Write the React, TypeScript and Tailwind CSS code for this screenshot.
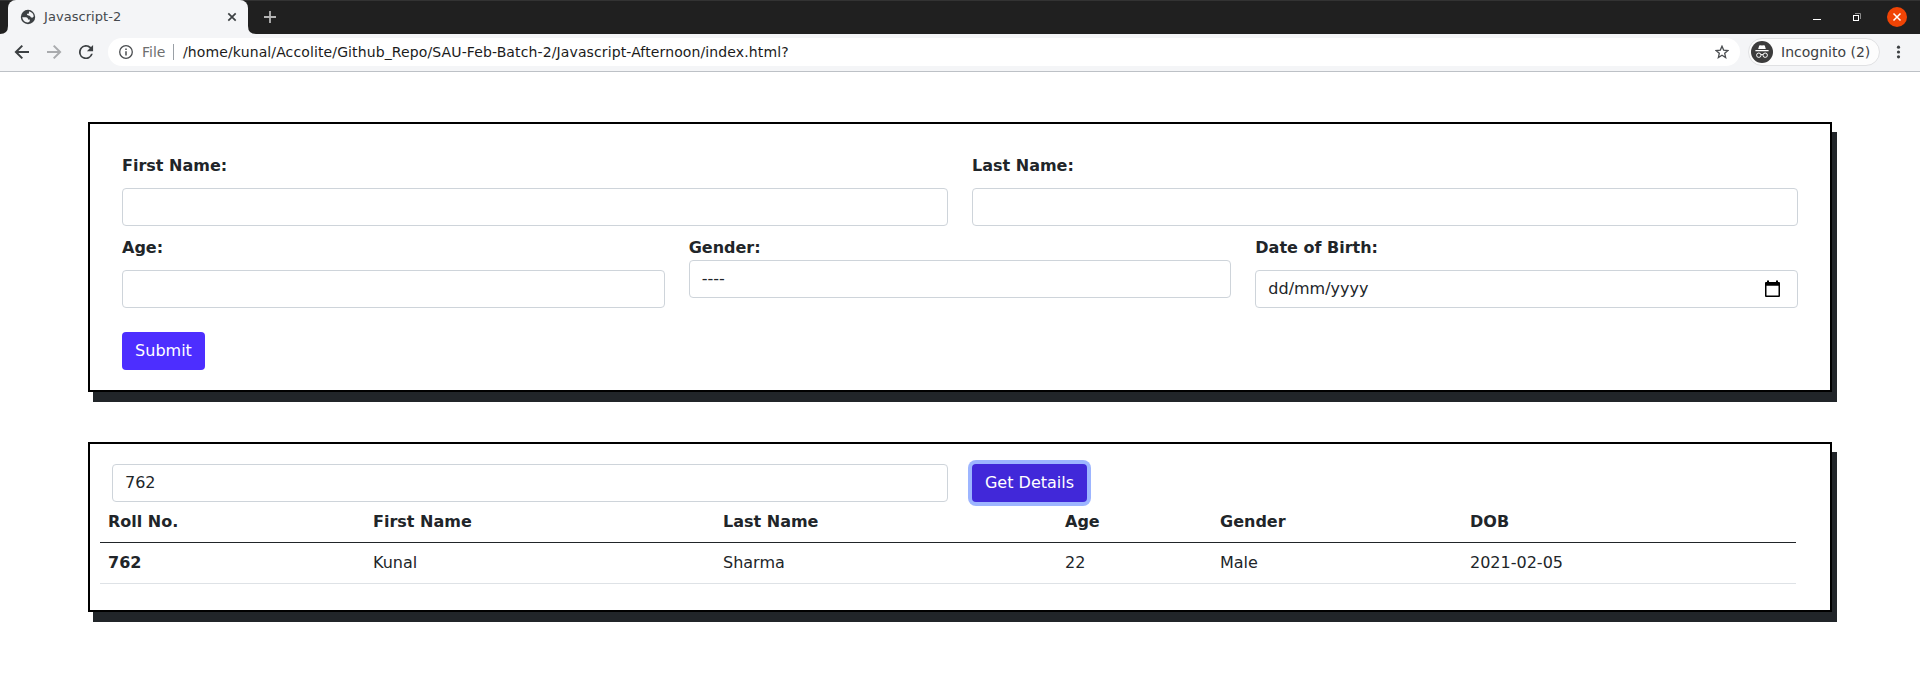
import React from "react";

const student = { roll: "762", first: "Kunal", last: "Sharma", age: "22", gender: "Male", dob: "2021-02-05" };

function TabStrip() {
  return (
    <div className="flex h-[34px] bg-[#202020] border-t border-[#333333] box-border">
      <div className="-mt-px flex h-[34px] w-[256px] shrink-0 items-end">
        <svg className="h-[34px] w-[8px] shrink-0" viewBox="0 0 8 34">
          <path d="M0 34 Q8 34 8 26 V34 Z" fill="#f4f5f7" />
        </svg>
        <div className="flex h-[34px] w-[240px] items-center rounded-t-lg bg-[#f4f5f7] pl-[12px] pr-[10px]">
          <svg width="16" height="16" viewBox="0 0 16 16">
            <circle cx="8" cy="8" r="7.2" fill="#3c4043" />
            <path d="M2.2 8.2 H6.2 Q8.2 8.4 8.1 10.4 H9.8 V12 Q9.6 13.4 7.6 13.6 Q3 13 2.2 8.2 Z M9.2 2.3 Q13.6 3.8 13.7 7.6 Q12.6 9.4 10.8 8.2 Q10.4 6.6 8.6 6.6 Q6.6 6.4 6.9 4.8 H8.7 Z" fill="#f4f5f7" />
          </svg>
          <span className="ml-[8px] text-[13px] leading-4 tracking-[0.05px] text-[#45494d]">Javascript-2</span>
          <svg className="ml-auto" width="12" height="12" viewBox="0 0 12 12">
            <path d="M2.3 2.3 L9.7 9.7 M9.7 2.3 L2.3 9.7" stroke="#3c4043" strokeWidth="1.7" />
          </svg>
        </div>
        <svg className="h-[34px] w-[8px] shrink-0" viewBox="0 0 8 34">
          <path d="M8 34 Q0 34 0 26 V34 Z" fill="#f4f5f7" />
        </svg>
      </div>
      <svg className="ml-[8px] mt-[10px]" width="12" height="12" viewBox="0 0 12 12">
        <path d="M6 0 V12 M0 6 H12" stroke="#b4b4b4" strokeWidth="1.8" />
      </svg>
      <div className="ml-auto flex h-[32px] items-center pr-[13px]">
        <svg width="8" height="12" viewBox="0 0 8 12">
          <path d="M0 8.5 H8" stroke="#ffffff" strokeWidth="1" />
        </svg>
        <svg className="ml-[32px]" width="8" height="8" viewBox="0 0 8 8">
          <path d="M2 0.5 H7.5 V6" fill="none" stroke="#8a8a8a" strokeWidth="1" />
          <rect x="0.5" y="2.5" width="5" height="5" fill="none" stroke="#ffffff" strokeWidth="1" />
        </svg>
        <svg className="ml-[26px]" width="20" height="20" viewBox="0 0 20 20">
          <circle cx="10" cy="10" r="10" fill="#f04405" />
          <path d="M6.5 6.5 L13.5 13.5 M13.5 6.5 L6.5 13.5" stroke="#ffffff" strokeWidth="1.5" />
        </svg>
      </div>
    </div>
  );
}

function Toolbar() {
  return (
    <div className="flex h-[38px] items-center border-b border-[#bdc1c6] bg-[#f4f5f7] pb-px pl-[14px]">
      <svg width="16" height="16" viewBox="0 0 16 16">
        <path d="M15 8 H2 M8.3 1.6 L1.9 8 L8.3 14.4" fill="none" stroke="#3c4043" strokeWidth="2" />
      </svg>
      <svg className="ml-[16px]" width="16" height="16" viewBox="0 0 16 16">
        <path d="M1 8 H14 M7.7 1.6 L14.1 8 L7.7 14.4" fill="none" stroke="#a9abae" strokeWidth="2" />
      </svg>
      <svg className="ml-[16px]" width="16" height="16" viewBox="0 0 16 16">
        <path d="M13.65 2.35A8 8 0 1 0 15.73 10H13.65A6 6 0 1 1 8 2c1.66 0 3.14.69 4.22 1.78L9 7h7V0z" fill="#3c4043" transform="translate(1 1) scale(.88)" />
      </svg>
      <div className="ml-[14px] flex h-[28px] w-[1632px] items-center rounded-full bg-white pl-[11px] pr-[11px]">
        <svg width="14" height="14" viewBox="0 0 14 14">
          <circle cx="7" cy="7" r="6.3" fill="none" stroke="#4a4d50" strokeWidth="1.3" />
          <path d="M7 6.2 V10.4 M7 3.5 V5" stroke="#4a4d50" strokeWidth="1.5" />
        </svg>
        <span className="ml-[9px] w-[24px] text-[14px] leading-5 text-[#6e6e6e]">File</span>
        <span className="ml-[7px] h-4 w-px bg-[#9aa0a6]" />
        <span className="ml-[9px] whitespace-nowrap text-[14px] leading-5 tracking-[0.12px] text-[#1b1b1b]">
          /home/kunal/Accolite/Github_Repo/SAU-Feb-Batch-2/Javascript-Afternoon/index.html?
        </span>
        <svg className="ml-auto" width="14" height="14" viewBox="0 0 14 14">
          <path d="M7 1.2 L8.65 5.1 L12.9 5.5 L9.7 8.3 L10.65 12.5 L7 10.2 L3.35 12.5 L4.3 8.3 L1.1 5.5 L5.35 5.1 Z" fill="none" stroke="#4a4d50" strokeWidth="1.3" />
        </svg>
      </div>
      <div className="ml-[8px] flex h-[28px] w-[132px] items-center rounded-full border border-[#e0e1e3] bg-[#fdfdfd] pl-[2px]">
        <svg width="22" height="22" viewBox="0 0 22 22">
          <circle cx="11" cy="11" r="11" fill="#3c3c3c" />
          <path d="M7.2 8 L8.2 4.4 Q9.5 4 11 4.4 Q12.5 4 13.8 4.4 L14.8 8 Z M4.4 9 H17.6 V10.2 H4.4 Z" fill="#ffffff" />
          <circle cx="7.8" cy="14.2" r="2.2" fill="none" stroke="#ffffff" strokeWidth="1" />
          <circle cx="14.2" cy="14.2" r="2.2" fill="none" stroke="#ffffff" strokeWidth="1" />
          <path d="M10 13.8 Q11 13 12 13.8" fill="none" stroke="#ffffff" />
        </svg>
        <span className="ml-[8px] whitespace-nowrap text-[14px] leading-5 text-[#3c4043]">Incognito (2)</span>
      </div>
      <svg className="ml-[16px]" width="5" height="14" viewBox="0 0 5 14">
        <circle cx="2.5" cy="2.2" r="1.6" fill="#3c4043" />
        <circle cx="2.5" cy="7" r="1.6" fill="#3c4043" />
        <circle cx="2.5" cy="11.8" r="1.6" fill="#3c4043" />
      </svg>
    </div>
  );
}

const control = "block h-[38px] w-full appearance-none rounded border border-[#ced4da] bg-white px-3 text-base leading-6 text-[#212529] outline-none";
const textInput = `${control} pb-0.5`;

function TextField({ label }: { label: string }) {
  return (
    <label className="block font-bold">
      <span className="mb-[10px] block leading-6">{label}</span>
      <input type="text" className={textInput} />
    </label>
  );
}

function StudentForm() {
  return (
    <form className="h-[270px] border-2 border-black px-8 pt-[30px] shadow-[5px_10px_#212529]" onSubmit={(e) => e.preventDefault()}>
      <div className="grid grid-cols-2 gap-6">
        <TextField label="First Name:" />
        <TextField label="Last Name:" />
      </div>
      <div className="mt-[10px] grid grid-cols-3 gap-6">
        <TextField label="Age:" />
        <div>
          <div className="font-bold leading-6">Gender:</div>
          <select className={control}>
            <option>----</option>
            <option>Male</option>
            <option>Female</option>
          </select>
        </div>
        <div>
          <div className="mb-[10px] font-bold leading-6">Date of Birth:</div>
          <div className="flex h-[38px] items-center justify-between rounded border border-[#ced4da] px-3 leading-6">
            <span>dd/mm/yyyy</span>
            <svg className="mb-px mr-[5px]" width="15" height="18" viewBox="0 0 15 18">
              <path d="M2 0.5 H4 V2 H11 V0.5 H13 V2 H14 Q15 2 15 3 V16 Q15 17 14 17 H1 Q0 17 0 16 V3 Q0 2 1 2 H2 Z M1.5 5.7 V15.5 H13.5 V5.7 Z" fill="#000000" fillRule="evenodd" />
            </svg>
          </div>
        </div>
      </div>
      <button className="mt-6 h-[38px] w-[83px] rounded bg-[#4d2eff] leading-6 text-white">Submit</button>
    </form>
  );
}

function StudentLookup() {
  return (
    <section className="mt-[50px] h-[170px] border-2 border-black pl-[10px] pt-5 shadow-[5px_10px_#212529]">
      <div className="flex gap-6 pl-3">
        <div className="w-[836px]">
          <input type="text" defaultValue="762" className={textInput} />
        </div>
        <button className="h-[38px] w-[115px] whitespace-nowrap rounded bg-[#4128d9] leading-6 text-white shadow-[0_0_0_4px_#9db5ff]">Get Details</button>
      </div>
      <table className="w-[1696px] table-fixed border-separate border-spacing-0 text-left leading-6">
        <colgroup>
          <col className="w-[265px]" />
          <col className="w-[350px]" />
          <col className="w-[342px]" />
          <col className="w-[155px]" />
          <col className="w-[250px]" />
          <col className="w-[334px]" />
        </colgroup>
        <thead>
          <tr>
            <th className="border-b border-[#212529] p-2 font-bold">Roll No.</th>
            <th className="border-b border-[#212529] p-2 font-bold">First Name</th>
            <th className="border-b border-[#212529] p-2 font-bold">Last Name</th>
            <th className="border-b border-[#212529] p-2 font-bold">Age</th>
            <th className="border-b border-[#212529] p-2 font-bold">Gender</th>
            <th className="border-b border-[#212529] p-2 font-bold">DOB</th>
          </tr>
        </thead>
        <tbody>
          <tr>
            <th className="border-b border-[#dee2e6] p-2 font-bold">{student.roll}</th>
            <td className="border-b border-[#dee2e6] p-2">{student.first}</td>
            <td className="border-b border-[#dee2e6] p-2">{student.last}</td>
            <td className="border-b border-[#dee2e6] p-2">{student.age}</td>
            <td className="border-b border-[#dee2e6] p-2">{student.gender}</td>
            <td className="border-b border-[#dee2e6] p-2">{student.dob}</td>
          </tr>
        </tbody>
      </table>
    </section>
  );
}

export default function App() {
  return (
    <div className="min-h-[695px] bg-white font-['DejaVu_Sans',sans-serif] text-base text-[#212529]">
      <TabStrip />
      <Toolbar />
      <main className="px-[88px] pt-[50px]">
        <StudentForm />
        <StudentLookup />
      </main>
    </div>
  );
}
